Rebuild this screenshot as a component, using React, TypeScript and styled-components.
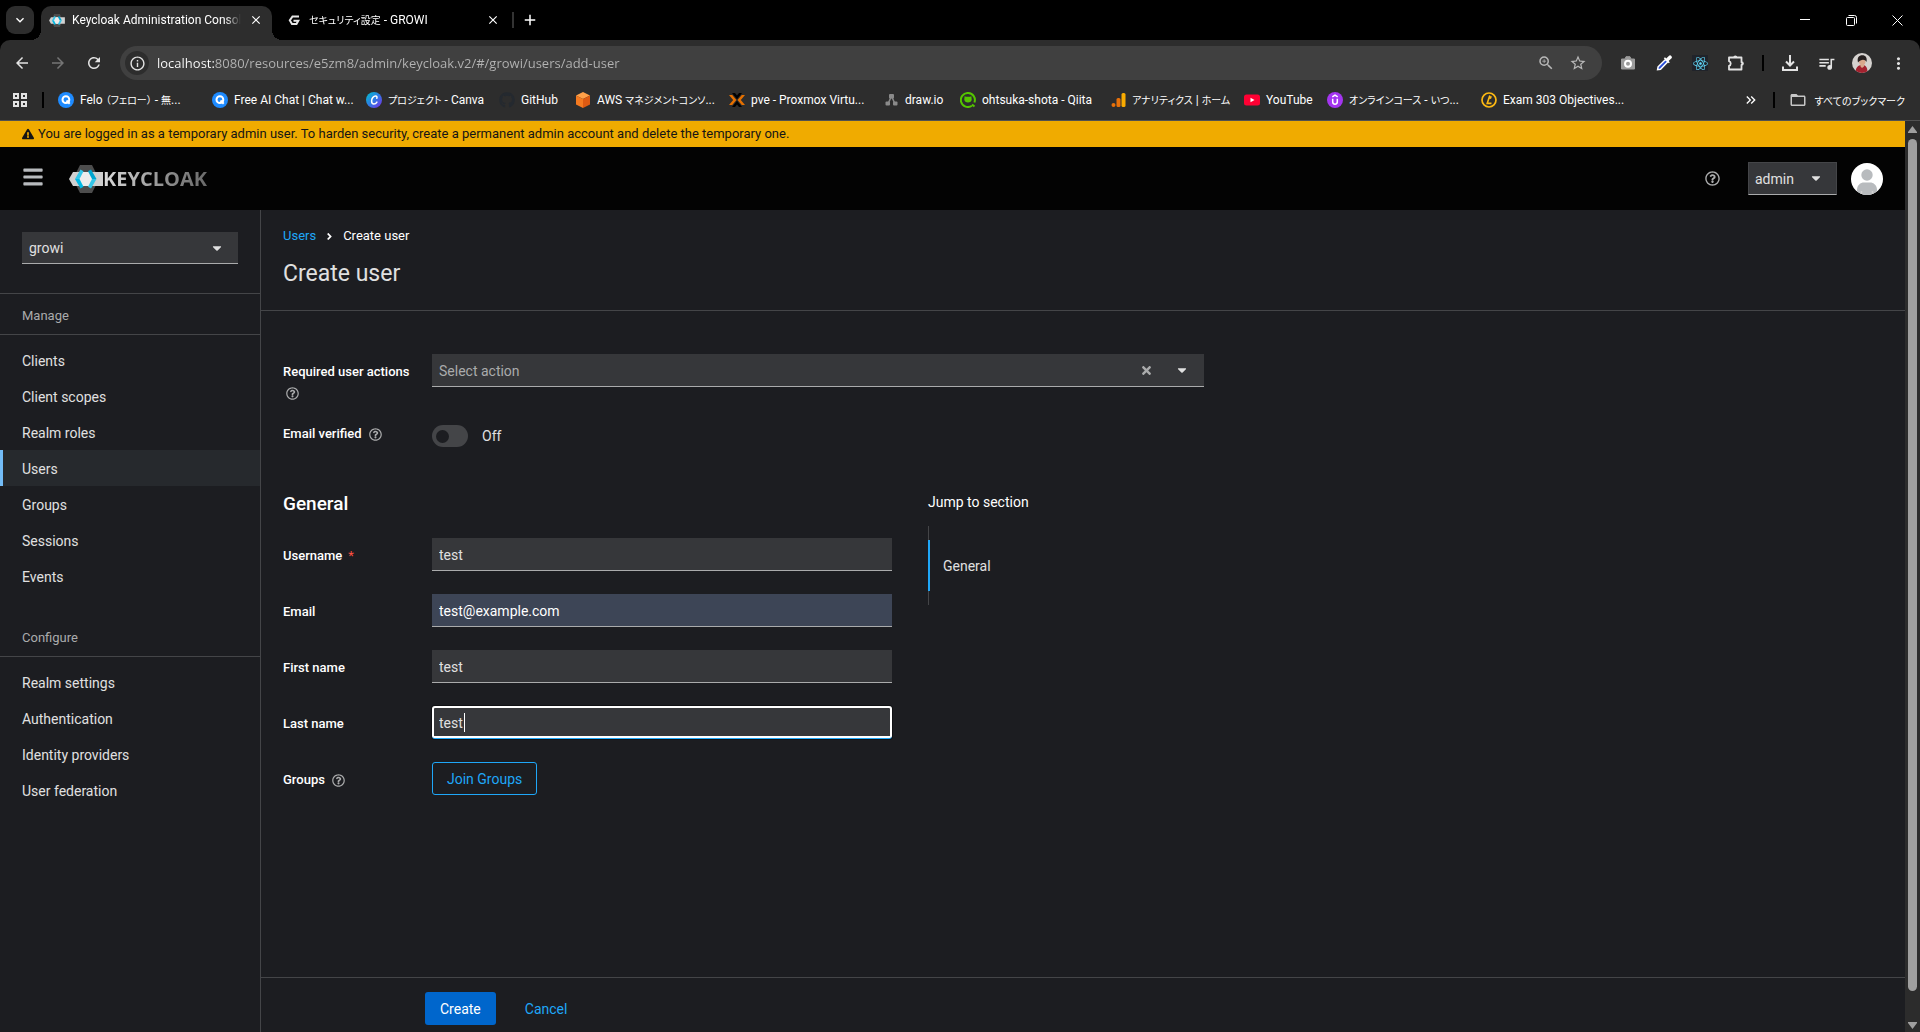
import React, { useState } from "react";
import styled, { createGlobalStyle, css } from "styled-components";
import {
  MdArrowBack,
  MdArrowForward,
  MdRefresh,
  MdOutlineZoomIn,
  MdStarBorder,
  MdQueueMusic,
  MdMoreVert,
  MdClose,
  MdAdd,
  MdExpandMore,
  MdOutlineInfo,
  MdKeyboardDoubleArrowRight,
  MdFolderOpen,
} from "react-icons/md";
import {
  FaBars,
  FaCaretDown,
  FaTimes,
  FaAngleRight,
  FaRegQuestionCircle,
  FaExclamationTriangle,
  FaGithub,
  FaReact,
} from "react-icons/fa";

const uiFont = `Roboto, "Noto Sans CJK JP", sans-serif`;

const color = {
  strip: "#000000",
  toolbar: "#2d2d2d",
  omnibox: "#404040",
  page: "#1c1d21",
  line: "#444548",
  field: "#36373a",
  fieldLine: "#aaabac",
  text: "#e0e0e0",
  muted: "#aaabac",
  link: "#1fa7f8",
  primary: "#0066cc",
  warning: "#f0ab00",
};

const GlobalStyle = createGlobalStyle`
  *, *::before, *::after { box-sizing: border-box; }
  body { margin: 0; background: ${color.page}; color: ${color.text}; font-family: ${uiFont}; font-size: 14px; }
  button, input, select { font: inherit; color: inherit; margin: 0; }
  button { padding: 0; border: 0; background: none; cursor: pointer; }
  a { color: inherit; text-decoration: none; }
  svg { display: block; flex: none; }
`;

const Window = styled.div`
  display: flex;
  flex-direction: column;
  height: 100vh;
  overflow: hidden;
`;

/* ---------- Browser chrome ---------- */

const TabStrip = styled.div`
  display: flex;
  height: 40px;
  padding: 6px 0 0 6px;
  background: ${color.strip};
  color: #fff;
  font-size: 12px;
`;

const TabSearch = styled.button`
  display: grid;
  place-items: center;
  width: 28px;
  height: 28px;
  margin-right: 7px;
  border-radius: 9px;
  background: ${color.toolbar};
`;

const Tab = styled.div<{ $active?: boolean }>`
  position: relative;
  display: flex;
  align-items: center;
  gap: 7px;
  width: 231px;
  height: 34px;
  margin-right: 6px;
  padding: 0 8px 6px;
  border-radius: 10px 10px 0 0;
  ${(p) =>
    p.$active &&
    css`
      background: ${color.toolbar};
      &::before,
      &::after {
        content: "";
        position: absolute;
        bottom: 0;
        width: 10px;
        height: 10px;
      }
      &::before {
        left: -10px;
        background: radial-gradient(circle at 0 0, transparent 10px, ${color.toolbar} 10px);
      }
      &::after {
        right: -10px;
        background: radial-gradient(circle at 100% 0, transparent 10px, ${color.toolbar} 10px);
      }
    `}
`;

const TabTitle = styled.span`
  flex: 1;
  min-width: 0;
  overflow: hidden;
  white-space: nowrap;
  line-height: 18px;
  mask-image: linear-gradient(90deg, #000 calc(100% - 16px), transparent);
`;

const TabClose = styled.button`
  display: grid;
  place-items: center;
  width: 16px;
  height: 16px;
`;

const TabDivider = styled.span`
  width: 2px;
  height: 16px;
  margin: 6px 0 0 -3px;
  background: #333;
`;

const NewTab = styled.button`
  display: grid;
  place-items: center;
  width: 28px;
  height: 28px;
  margin-left: 2px;
`;

const WindowControls = styled.div`
  display: flex;
  margin: -6px 0 0 auto;
`;

const WindowButton = styled.button`
  display: grid;
  place-items: center;
  width: 46px;
  height: 40px;
`;

const ToolbarBack = styled.div`
  background: ${color.strip};
`;

const Toolbar = styled.div`
  display: flex;
  align-items: center;
  height: 40px;
  padding: 6px 4px 0;
  border-radius: 10px 10px 0 0;
  background: ${color.toolbar};
  color: #e3e3e3;
`;

const ToolButton = styled.button<{ $dim?: boolean }>`
  display: grid;
  place-items: center;
  flex: none;
  width: 36px;
  height: 34px;
  color: ${(p) => (p.$dim ? "#757575" : "#e3e3e3")};
`;

const Separator = styled.span<{ $cell: number }>`
  flex: none;
  width: ${(p) => p.$cell}px;
  height: 16px;
  background: linear-gradient(#000, #000) center / 2px 100% no-repeat;
`;

const Omnibox = styled.div`
  display: flex;
  align-items: center;
  flex: 1;
  height: 34px;
  margin: 0 8px;
  padding: 0 8px 0 5px;
  border-radius: 17px;
  background: ${color.omnibox};
`;

const SiteInfo = styled.button`
  display: grid;
  place-items: center;
  width: 24px;
  height: 24px;
  margin-right: 8px;
  border-radius: 50%;
  background: ${color.toolbar};
`;

const Address = styled.input`
  flex: 1;
  min-width: 0;
  height: 24px;
  padding: 0;
  border: 0;
  outline: 0;
  font-family: "Open Sans", sans-serif;
  font-size: 13px;
  color: transparent;
  background: linear-gradient(90deg, #fff 57px, #b4b4b4 57px);
  background-clip: text;
`;

const OmniButton = styled.button`
  display: grid;
  place-items: center;
  width: 32px;
  height: 32px;
  color: #b8b8b8;
`;

const BookmarkBar = styled.nav`
  display: flex;
  align-items: center;
  height: 41px;
  padding: 0 15px 0 4px;
  border-bottom: 1px solid #515151;
  background: ${color.toolbar};
  color: #fff;
  font-size: 12px;
  white-space: nowrap;
`;

const AppsButton = styled.button`
  display: grid;
  place-items: center;
  width: 32px;
  height: 32px;
`;

const Bookmark = styled.a<{ $slot: number }>`
  display: flex;
  align-items: center;
  gap: 6px;
  flex: 0 0 ${(p) => p.$slot}px;
  line-height: 20px;
`;

const BookmarkList = styled.div`
  display: flex;
  flex: 1;
  min-width: 0;
  padding-left: 8px;
  overflow: hidden;
`;

const Ja = styled.span`
  font-size: 10px;
  font-feature-settings: "palt";
`;

const AllBookmarks = styled.a`
  display: flex;
  align-items: center;
  gap: 8px;
  padding-left: 4px;
`;

const MoreBookmarks = styled.button`
  display: grid;
  place-items: center;
  width: 24px;
  height: 24px;
`;

/* ---------- Page ---------- */

const Viewport = styled.div`
  display: flex;
  flex: 1;
  min-height: 0;
`;

const Page = styled.div`
  display: flex;
  flex-direction: column;
  flex: 1;
  min-width: 0;
`;

const ScrollTrack = styled.div`
  display: flex;
  flex-direction: column;
  align-items: center;
  flex: none;
  width: 15px;
  padding: 5px 0 3px;
  background: #2c2c2c;
  color: #9f9f9f;
`;

const ScrollThumb = styled.div`
  flex: 1;
  width: 9px;
  margin: 6px 0 31px;
  border-radius: 5px;
  background: #9f9f9f;
`;

const Banner = styled.div`
  display: flex;
  align-items: center;
  gap: 4px;
  height: 26px;
  flex: none;
  padding: 0 22px 1px;
  background: ${color.warning};
  color: #151515;
  font-size: 13px;
`;

const Masthead = styled.header`
  display: flex;
  align-items: center;
  flex: none;
  height: 63px;
  padding: 0 22px;
  background: #030303;
`;

const MenuButton = styled.button`
  margin-right: 25px;
  padding-bottom: 3px;
  color: #b8bbbe;
`;

const Brand = styled.a`
  display: flex;
  align-items: center;
`;

const BrandName = styled.span`
  font-family: "Open Sans", sans-serif;
  font-size: 20px;
  font-weight: 700;
  line-height: 28px;
  color: transparent;
  background: linear-gradient(90deg, #dcdcdc, #8f8f8f 60%, #6a6a6a);
  background-clip: text;
`;

const MastheadTools = styled.div`
  display: flex;
  align-items: center;
  margin-left: auto;
`;

const HelpButton = styled.button`
  color: ${color.muted};
`;

const SelectBox = styled.div`
  position: relative;
  color: ${color.text};
  select {
    display: block;
    width: 100%;
    height: 32px;
    padding: 0 32px 0 7px;
    appearance: none;
    border: 0;
    border-bottom: 1px solid ${color.fieldLine};
    border-radius: 0;
    background: ${color.field};
    outline: 0;
  }
  svg {
    position: absolute;
    right: 14px;
    top: 9px;
    pointer-events: none;
  }
`;

const UserMenu = styled(SelectBox)`
  width: 89px;
  margin: 0 14px 0 28px;
  select {
    height: 33px;
    padding-left: 6px;
    border: 1px solid ${color.line};
    border-bottom-color: ${color.fieldLine};
  }
`;

const Columns = styled.div`
  display: flex;
  flex: 1;
  min-height: 0;
`;

const Sidebar = styled.nav`
  flex: none;
  width: 261px;
  border-right: 1px solid ${color.line};
`;

const RealmPicker = styled.div`
  padding: 22px 22px 29px;
  border-bottom: 1px solid ${color.line};
`;

const NavTitle = styled.h2`
  margin: 0;
  padding: 12px 22px 8px;
  border-bottom: 1px solid ${color.line};
  font-size: 13px;
  font-weight: 400;
  line-height: 20px;
  color: ${color.muted};
`;

const NavList = styled.ul`
  margin: 0;
  padding: 7px 0 22px;
  list-style: none;
`;

const NavLink = styled.a<{ $current?: boolean }>`
  display: block;
  padding: 9px 22px 7px 19px;
  border-left: 3px solid ${(p) => (p.$current ? "#73bcf7" : "transparent")};
  line-height: 20px;
  background: ${(p) => (p.$current ? "#26292d" : "none")};
`;

const Main = styled.main`
  display: flex;
  flex-direction: column;
  flex: 1;
  min-width: 0;
`;

const PageHead = styled.section`
  padding: 17px 22px 21px;
  border-bottom: 1px solid ${color.line};
`;

const Breadcrumb = styled.nav`
  display: flex;
  align-items: center;
  gap: 8px;
  font-size: 13px;
  line-height: 18px;
  color: #fff;
  a {
    color: ${color.link};
  }
`;

const Title = styled.h1`
  margin: 14px 0 0;
  font-size: 23px;
  font-weight: 400;
  line-height: 30px;
`;

const FormArea = styled.form`
  display: flex;
  flex-direction: column;
  flex: 1;
  min-height: 0;
`;

const FormBody = styled.div`
  flex: 1;
  width: 100%;
  max-width: 965px;
  padding: 43px 22px 0;
`;

const Rows = styled.div<{ $gap: number }>`
  display: grid;
  gap: ${(p) => p.$gap}px;
`;

const FormRow = styled.div`
  display: grid;
  grid-template-columns: 135px minmax(0, 1fr);
  column-gap: 14px;
`;

const LabelCell = styled.div`
  display: flex;
  flex-wrap: wrap;
  align-items: center;
  align-content: flex-start;
  gap: 5px 4px;
  padding-top: 8px;
  color: #fff;
  font-size: 13px;
  font-weight: 500;
  line-height: 20px;
  button {
    padding: 0 3px;
  }
`;

const Required = styled.span`
  margin-left: 2px;
  font-weight: 400;
  color: #fe5142;
`;

const Field = styled.div`
  position: relative;
`;

const TextInput = styled.input<{ $autofilled?: boolean; $focused?: boolean }>`
  display: block;
  width: 100%;
  height: 33px;
  padding: 2px 7px 0;
  border: 0;
  border-bottom: 1px solid ${color.fieldLine};
  border-radius: 0;
  outline: 0;
  background: ${(p) => (p.$autofilled ? "#3d4556" : color.field)};
  color: ${(p) => (p.$autofilled ? "#fff" : color.text)};
  ${(p) =>
    p.$focused &&
    css`
      border-bottom-color: ${color.link};
      border-radius: 3px;
      box-shadow: inset 0 0 0 2px #fff, 0 0 0 1px #101114;
      caret-color: transparent;
    `}
`;

const Caret = styled.span`
  position: absolute;
  left: 32px;
  top: 7px;
  width: 1px;
  height: 19px;
  background: #fff;
`;

const Typeahead = styled.div`
  display: flex;
  align-items: center;
  height: 33px;
  padding-right: 4px;
  border-bottom: 1px solid ${color.fieldLine};
  background: ${color.field};
  input {
    flex: 1;
    min-width: 0;
    padding: 2px 7px 0;
    border: 0;
    outline: 0;
    background: none;
  }
  input::placeholder {
    color: ${color.muted};
    opacity: 1;
  }
  button {
    display: grid;
    place-items: center;
    width: 36px;
    height: 32px;
  }
`;

const SwitchLabel = styled.label`
  display: flex;
  align-items: center;
  gap: 14px;
  padding-top: 9px;
  line-height: 22px;
`;

const Switch = styled.input`
  appearance: none;
  display: flex;
  align-items: center;
  width: 36px;
  height: 22px;
  padding: 0 4px;
  border-radius: 11px;
  background: #444548;
  &::before {
    content: "";
    width: 13px;
    height: 13px;
    border-radius: 50%;
    background: ${color.page};
  }
  &:checked {
    justify-content: flex-end;
    background: ${color.link};
  }
`;

const Sections = styled.div`
  display: grid;
  grid-template-columns: minmax(0, 609px) minmax(0, 1fr);
  column-gap: 36px;
  margin-top: 45px;
`;

const SectionTitle = styled.h2`
  margin: 0 0 22px;
  font-size: 19px;
  font-weight: 500;
  line-height: 24px;
  color: #fff;
`;

const JumpTitle = styled.div`
  margin-bottom: 14px;
  line-height: 20px;
  color: #fff;
  white-space: nowrap;
`;

const JumpList = styled.ul`
  margin: 0;
  padding: 14px 0;
  list-style: none;
  border-left: 1px solid ${color.line};
  a {
    display: block;
    margin-left: -1px;
    padding: 16px 13px 15px;
    border-left: 2px solid ${color.link};
    line-height: 20px;
  }
`;

const Button = styled.button<{ $kind: "primary" | "secondary" | "link" }>`
  height: 33px;
  padding: 0 14px;
  border-radius: 3px;
  ${(p) =>
    p.$kind === "primary"
      ? css`
          padding: 0 15px;
          background: ${color.primary};
          color: #fff;
        `
      : css`
          color: ${color.link};
        `}
  ${(p) =>
    p.$kind === "secondary" &&
    css`
      border: 1px solid ${color.link};
    `}
`;

const Footer = styled.footer`
  display: flex;
  gap: 15px;
  padding: 14px 22px 7px 164px;
  border-top: 1px solid ${color.line};
`;

/* ---------- Icons ---------- */

const KeycloakMark = ({ width = 34, height = 28 }: { width?: number; height?: number }) => (
  <svg width={width} height={height} viewBox="0 0 34 28" aria-hidden="true">
    <path d="M11 0h12l7 14-7 14H11L4 14z" fill="#4d4d4d" />
    <path d="M4 7h30v14H4L0 14z" fill="#d0d0d0" />
    <path d="M13 7h7l4 7-4 7h-7l-3-7z" fill="#ececec" />
    <path d="M11.500 4.500L14.500 6.200 10.500 14H6z" fill="#33c6e9" />
    <path d="M6 14h4.500l4 7.800-3 1.700z" fill="#00b8e3" />
    <path d="M22 4.500L19 6.200l4 7.800h4.500z" fill="#00a5cf" />
    <path d="M27.500 14H23l-4 7.800 3 1.700z" fill="#33c6e9" />
  </svg>
);

const GrowiIcon = () => (
  <svg width="16" height="16" viewBox="0 0 16 16" aria-hidden="true">
    <path d="M13 4.500H6.500L3.800 8.300l2.200 3.700h4.500l1.800-3.200H7.500" fill="none" stroke="#e6e6e6" strokeWidth="2" />
  </svg>
);

const FeloIcon = () => (
  <svg width="16" height="16" viewBox="0 0 16 16" aria-hidden="true">
    <circle cx="8" cy="8" r="8" fill="#1e8bff" />
    <circle cx="7.900" cy="7.700" r="3.400" fill="none" stroke="#fff" strokeWidth="2" />
    <path d="M8.500 8.500l3.200 3.300" stroke="#fff" strokeWidth="2" />
  </svg>
);

const CanvaIcon = () => (
  <svg width="16" height="16" viewBox="0 0 16 16" aria-hidden="true">
    <defs>
      <linearGradient id="canva" x1="0" y1="0" x2="1" y2="1">
        <stop offset="0" stopColor="#00c4cc" />
        <stop offset=".5" stopColor="#2f7be5" />
        <stop offset="1" stopColor="#7d2ae8" />
      </linearGradient>
    </defs>
    <circle cx="8" cy="8" r="8" fill="url(#canva)" />
    <path d="M10.800 6.200c.5-1.300 0-2.200-1.200-2.200C7.500 4 5.600 6.500 5.600 9c0 1.800.9 3 2.300 3 1.200 0 2.300-.7 3-1.900" fill="none" stroke="#fff" strokeWidth="1.500" strokeLinecap="round" />
  </svg>
);

const AwsIcon = () => (
  <svg width="16" height="16" viewBox="0 0 16 16" aria-hidden="true">
    <path d="M8 0l7 3.500L8 7 1 3.500z" fill="#ffa048" />
    <path d="M1 3.500L8 7v9l-7-3.500z" fill="#f47a20" />
    <path d="M15 3.500L8 7v9l7-3.500z" fill="#dd5a12" />
  </svg>
);

const ProxmoxIcon = () => (
  <svg width="16" height="16" viewBox="0 0 16 16" aria-hidden="true">
    <path d="M3 1h3l2 2.400L10 1h3L8 7.200zM3 15h3l2-2.400L10 15h3L8 8.800z" fill="#000" />
    <path d="M0 3h3.200L7.400 8l-4.200 5H0l4.200-5zM16 3h-3.200L8.600 8l4.200 5H16l-4.200-5z" fill="#e57000" />
  </svg>
);

const DrawioIcon = () => (
  <svg width="15" height="16" viewBox="0 0 15 16" aria-hidden="true">
    <path d="M7.500 4L4 12M7.500 4l3.500 8" stroke="#8a8a8a" strokeWidth="1.500" />
    <rect x="5" y="2" width="5" height="4.500" rx="1" fill="#8a8a8a" />
    <rect x="1.500" y="9.500" width="4.500" height="4" rx="1" fill="#8a8a8a" />
    <rect x="9" y="9.500" width="4.500" height="4" rx="1" fill="#8a8a8a" />
  </svg>
);

const QiitaIcon = () => (
  <svg width="16" height="16" viewBox="0 0 16 16" aria-hidden="true">
    <path d="M11.900 13.700A7 7 0 1 1 14.400 10.500" fill="none" stroke="#55c500" strokeWidth="2" />
    <path d="M12 12.500l2.500 2" stroke="#55c500" strokeWidth="2" />
    <path d="M4.600 4.200l1.500.6h3.800l1.500-.6.300 3.300c0 2-1.700 3-3.700 3s-3.700-1-3.700-3z" fill="#55c500" />
  </svg>
);

const AnalyticsIcon = () => (
  <svg width="15" height="16" viewBox="0 0 15 16" aria-hidden="true">
    <circle cx="2.500" cy="13" r="2" fill="#e8710a" />
    <rect x="5.500" y="6" width="4" height="9" rx="1.500" fill="#e8710a" />
    <rect x="10.500" y="1" width="4" height="14" rx="1.500" fill="#f9ab00" />
  </svg>
);

const YouTubeIcon = () => (
  <svg width="16" height="16" viewBox="0 0 16 16" aria-hidden="true">
    <rect y="2.500" width="16" height="11" rx="2.500" fill="#ff0033" />
    <path d="M6.500 5.700v4.600L10.500 8z" fill="#fff" />
  </svg>
);

const UdemyIcon = () => (
  <svg width="16" height="16" viewBox="0 0 16 16" aria-hidden="true">
    <circle cx="8" cy="8" r="8" fill="#a435f0" />
    <path d="M5.300 4.800L8 3.200l2.700 1.600M5.700 6.800v3c0 1.400.9 2.400 2.300 2.400s2.300-1 2.300-2.400v-3" fill="none" stroke="#fff" strokeWidth="1.500" />
  </svg>
);

const LpiIcon = () => (
  <svg width="16" height="16" viewBox="0 0 16 16" aria-hidden="true">
    <circle cx="8" cy="8" r="7" fill="none" stroke="#fdb913" strokeWidth="1.700" />
    <path d="M8.800 3.600L6.200 11.400h4.300M10.200 4.200l-1 2.600" fill="none" stroke="#fdb913" strokeWidth="1.600" />
  </svg>
);

const CameraIcon = () => (
  <svg width="16" height="16" viewBox="0 0 16 16" aria-hidden="true">
    <path d="M1.500 4H5l1-2.300h4L11 4h3.500v10h-13z" fill="#9b9b9b" stroke="#9b9b9b" strokeLinejoin="round" />
    <circle cx="8" cy="8.800" r="3" fill="none" stroke="#fff" strokeWidth="2" />
  </svg>
);

const DropperIcon = () => (
  <svg width="16" height="16" viewBox="0 0 16 16" aria-hidden="true">
    <path d="M9.500 4.500l2.300 2.300-7.300 7.400-2.900.4.500-2.800z" fill="#2b50d8" stroke="#fff" strokeWidth="1.500" />
    <path d="M7.800 3.300l5 5 1-1-1.200-1.300 2.700-2.600a1.700 1.700 0 0 0-2.500-2.500L10.200 3.500 9 2.200z" fill="#fff" />
  </svg>
);

const ExtensionIcon = () => (
  <svg width="18" height="18" viewBox="0 0 18 18" fill="none" aria-hidden="true">
    <path
      d="M2 3.500h12.500v4.700a1.300 1.300 0 0 1 0 2.600v4.700H2v-3.700a2.400 2.400 0 0 0 0-4.600z"
      stroke="#e3e3e3"
      strokeWidth="1.800"
      strokeLinejoin="round"
    />
    <path d="M6.300 3.500a2 2 0 0 1 4 0zM14.500 7.500a2 2 0 0 1 0 4z" fill="#e3e3e3" />
  </svg>
);

const ReactTile = styled.span`
  display: grid;
  place-items: center;
  width: 16px;
  height: 16px;
  background: #20232a;
  color: #61dafb;
`;

const DownloadIcon = () => (
  <svg width="18" height="18" viewBox="0 0 18 18" fill="none" stroke="#e3e3e3" strokeWidth="2" aria-hidden="true">
    <path d="M9 1v10M5 7.500l4 4 4-4M2 12.500V16h14v-3.500" />
  </svg>
);

const ProfilePhoto = () => (
  <svg width="20" height="20" viewBox="0 0 20 20" aria-hidden="true">
    <clipPath id="profile">
      <circle cx="10" cy="10" r="10" />
    </clipPath>
    <g clipPath="url(#profile)">
      <rect width="20" height="20" fill="#d5d2cf" />
      <path d="M3.500 20c0-5 2-8 6.500-8s5.500 3 5.500 8z" fill="#a3222f" />
      <path d="M8.500 11h3.500v2.500l-2 1.500-1.500-1.500z" fill="#d9a78c" />
      <ellipse cx="10.300" cy="8.500" rx="3.200" ry="3.700" fill="#d9a78c" />
      <path d="M6 9.500C4.800 4.500 7 2.300 10.300 2.300s5.200 2.500 4.200 6.700c-.8-1.500-2-2.300-3.500-2.300S7.500 7.500 6 9.500z" fill="#26201f" />
    </g>
  </svg>
);

const AvatarIcon = () => (
  <svg width="32" height="32" viewBox="0 0 32 32" aria-hidden="true">
    <clipPath id="avatar">
      <circle cx="16" cy="16" r="16" />
    </clipPath>
    <g clipPath="url(#avatar)">
      <rect width="32" height="32" fill="#fff" />
      <circle cx="16" cy="12" r="5.700" fill="#b8bbbe" />
      <path d="M6 32v-5c0-5 3.500-7.500 7-7.500h6c3.500 0 7 2.500 7 7.500v5z" fill="#b8bbbe" />
      <path d="M10.500 32v-4M21.500 32v-4" stroke="#d2d2d2" strokeWidth="1.500" />
    </g>
  </svg>
);

const AppsIcon = () => (
  <svg width="16" height="16" viewBox="0 0 16 16" fill="none" stroke="#e3e3e3" strokeWidth="2" aria-hidden="true">
    <path d="M2 2h4v4H2zM10 2h4v4h-4zM2 10h4v4H2zM10 10h4v4h-4z" />
  </svg>
);

const MinimizeIcon = () => (
  <svg width="10" height="10" stroke="#fff" aria-hidden="true">
    <path d="M0 4.500h10" />
  </svg>
);

const RestoreIcon = () => (
  <svg width="11" height="11" fill="none" stroke="#fff" aria-hidden="true">
    <rect x=".5" y="2.500" width="8" height="8" rx="1" />
    <path d="M2.500 .5h6a2 2 0 0 1 2 2v6" />
  </svg>
);

const CloseWindowIcon = () => (
  <svg width="11" height="11" fill="none" stroke="#fff" aria-hidden="true">
    <path d="M.5 .5l10 10M10.500 .5l-10 10" />
  </svg>
);

/* ---------- Data ---------- */

const bookmarks = [
  { icon: <FeloIcon />, slot: 154, label: <>Felo <Ja>（フェロー）</Ja> - <Ja>無</Ja>...</> },
  { icon: <FeloIcon />, slot: 154, label: "Free AI Chat | Chat w..." },
  { icon: <CanvaIcon />, slot: 133, label: <><Ja>プロジェクト</Ja> - Canva</> },
  { icon: <FaGithub size={16} color="#24292f" />, slot: 76, label: "GitHub" },
  { icon: <AwsIcon />, slot: 154, label: <>AWS <Ja>マネジメントコンソ</Ja>...</> },
  { icon: <ProxmoxIcon />, slot: 155, label: "pve - Proxmox Virtu..." },
  { icon: <DrawioIcon />, slot: 76, label: "draw.io" },
  { icon: <QiitaIcon />, slot: 151, label: "ohtsuka-shota - Qiita" },
  { icon: <AnalyticsIcon />, slot: 133, label: <><Ja>アナリティクス</Ja> | <Ja>ホーム</Ja></> },
  { icon: <YouTubeIcon />, slot: 83, label: "YouTube" },
  { icon: <UdemyIcon />, slot: 154, label: <><Ja>オンラインコース</Ja> - <Ja>いつ</Ja>...</> },
  { icon: <LpiIcon />, slot: 154, label: "Exam 303 Objectives..." },
];

const navGroups = [
  { title: "Manage", items: ["Clients", "Client scopes", "Realm roles", "Users", "Groups", "Sessions", "Events"] },
  { title: "Configure", items: ["Realm settings", "Authentication", "Identity providers", "User federation"] },
];

const textFields = [
  { id: "username", label: "Username", value: "test", required: true },
  { id: "email", label: "Email", value: "test@example.com", autofilled: true },
  { id: "firstName", label: "First name", value: "test" },
  { id: "lastName", label: "Last name", value: "test", focused: true },
];

const Help = ({ topic }: { topic: string }) => (
  <HelpButton type="button" aria-label={`Help for ${topic}`}>
    <FaRegQuestionCircle size={13} />
  </HelpButton>
);

const BrowserChrome = () => (
  <>
    <TabStrip>
      <TabSearch aria-label="Search tabs">
        <MdExpandMore size={16} />
      </TabSearch>
      <Tab $active>
        <KeycloakMark width={16} height={13} />
        <TabTitle>Keycloak Administration Consol</TabTitle>
        <TabClose aria-label="Close tab">
          <MdClose size={14} />
        </TabClose>
      </Tab>
      <Tab>
        <GrowiIcon />
        <TabTitle>
          <Ja>セキュリティ設定</Ja> - GROWI
        </TabTitle>
        <TabClose aria-label="Close tab">
          <MdClose size={14} />
        </TabClose>
      </Tab>
      <TabDivider />
      <NewTab aria-label="New tab">
        <MdAdd size={18} />
      </NewTab>
      <WindowControls>
        <WindowButton aria-label="Minimize"><MinimizeIcon /></WindowButton>
        <WindowButton aria-label="Restore"><RestoreIcon /></WindowButton>
        <WindowButton aria-label="Close"><CloseWindowIcon /></WindowButton>
      </WindowControls>
    </TabStrip>
    <ToolbarBack>
      <Toolbar>
        <ToolButton aria-label="Back"><MdArrowBack size={18} /></ToolButton>
        <ToolButton aria-label="Forward" $dim><MdArrowForward size={18} /></ToolButton>
        <ToolButton aria-label="Reload"><MdRefresh size={18} /></ToolButton>
        <Omnibox>
          <SiteInfo aria-label="Site information"><MdOutlineInfo size={17} /></SiteInfo>
          <Address
            aria-label="Address"
            defaultValue="localhost:8080/resources/e5zm8/admin/keycloak.v2/#/growi/users/add-user"
          />
          <OmniButton aria-label="Zoom"><MdOutlineZoomIn size={18} /></OmniButton>
          <OmniButton aria-label="Bookmark this page"><MdStarBorder size={18} /></OmniButton>
        </Omnibox>
        <ToolButton aria-label="Screenshot extension"><CameraIcon /></ToolButton>
        <ToolButton aria-label="Color picker extension"><DropperIcon /></ToolButton>
        <ToolButton aria-label="React developer tools"><ReactTile><FaReact size={15} /></ReactTile></ToolButton>
        <ToolButton aria-label="Extensions"><ExtensionIcon /></ToolButton>
        <Separator $cell={18} />
        <ToolButton aria-label="Downloads"><DownloadIcon /></ToolButton>
        <ToolButton aria-label="Media controls"><MdQueueMusic size={19} /></ToolButton>
        <ToolButton aria-label="Profile"><ProfilePhoto /></ToolButton>
        <ToolButton aria-label="Browser menu"><MdMoreVert size={19} /></ToolButton>
      </Toolbar>
    </ToolbarBack>
    <BookmarkBar aria-label="Bookmarks">
      <AppsButton aria-label="Apps"><AppsIcon /></AppsButton>
      <Separator $cell={14} />
      <BookmarkList>
        {bookmarks.map((b, i) => (
          <Bookmark key={i} href="#" $slot={b.slot}>
            {b.icon}
            <span>{b.label}</span>
          </Bookmark>
        ))}
      </BookmarkList>
      <MoreBookmarks aria-label="More bookmarks"><MdKeyboardDoubleArrowRight size={16} /></MoreBookmarks>
      <Separator $cell={22} />
      <AllBookmarks href="#">
        <MdFolderOpen size={18} color="#c7c7c7" />
        <Ja>すべてのブックマーク</Ja>
      </AllBookmarks>
    </BookmarkBar>
  </>
);

const SideNav = () => (
  <Sidebar aria-label="Realm">
    <RealmPicker>
      <SelectBox>
        <select aria-label="Realm" defaultValue="growi">
          <option>growi</option>
        </select>
        <FaCaretDown size={14} />
      </SelectBox>
    </RealmPicker>
    {navGroups.map((group) => (
      <section key={group.title}>
        <NavTitle>{group.title}</NavTitle>
        <NavList>
          {group.items.map((item) => (
            <li key={item}>
              <NavLink href="#" $current={item === "Users"}>{item}</NavLink>
            </li>
          ))}
        </NavList>
      </section>
    ))}
  </Sidebar>
);

const CreateUserForm = () => {
  const [verified, setVerified] = useState(false);
  return (
    <FormArea onSubmit={(e) => e.preventDefault()}>
      <FormBody>
        <Rows $gap={16}>
          <FormRow>
            <LabelCell>
              <label htmlFor="actions">Required user actions</label>
              <Help topic="required user actions" />
            </LabelCell>
            <Typeahead>
              <input id="actions" placeholder="Select action" />
              <button type="button" aria-label="Clear"><FaTimes size={13} color={color.muted} /></button>
              <button type="button" aria-label="Toggle options"><FaCaretDown size={14} /></button>
            </Typeahead>
          </FormRow>
          <FormRow>
            <LabelCell>
              <label htmlFor="verified">Email verified</label>
              <Help topic="email verified" />
            </LabelCell>
            <SwitchLabel>
              <Switch
                id="verified"
                type="checkbox"
                role="switch"
                checked={verified}
                onChange={(e) => setVerified(e.target.checked)}
              />
              {verified ? "On" : "Off"}
            </SwitchLabel>
          </FormRow>
        </Rows>
        <Sections>
          <section>
            <SectionTitle>General</SectionTitle>
            <Rows $gap={23}>
              {textFields.map((f) => (
                <FormRow key={f.id}>
                  <LabelCell>
                    <label htmlFor={f.id}>{f.label}</label>
                    {f.required && <Required>*</Required>}
                  </LabelCell>
                  <Field>
                    <TextInput id={f.id} defaultValue={f.value} $autofilled={f.autofilled} $focused={f.focused} />
                    {f.focused && <Caret />}
                  </Field>
                </FormRow>
              ))}
              <FormRow>
                <LabelCell>
                  <span>Groups</span>
                  <Help topic="groups" />
                </LabelCell>
                <div>
                  <Button type="button" $kind="secondary">Join Groups</Button>
                </div>
              </FormRow>
            </Rows>
          </section>
          <nav aria-label="Jump to section">
            <JumpTitle>Jump to section</JumpTitle>
            <JumpList>
              <li><a href="#">General</a></li>
            </JumpList>
          </nav>
        </Sections>
      </FormBody>
      <Footer>
        <Button type="submit" $kind="primary">Create</Button>
        <Button type="button" $kind="link">Cancel</Button>
      </Footer>
    </FormArea>
  );
};

export default function App() {
  return (
    <Window>
      <GlobalStyle />
      <BrowserChrome />
      <Viewport>
        <Page>
          <Banner>
            <FaExclamationTriangle size={12} />
            <span>
              You are logged in as a temporary admin user. To harden security, create a permanent admin
              account and delete the temporary one.
            </span>
          </Banner>
          <Masthead>
            <MenuButton aria-label="Global navigation"><FaBars size={22} /></MenuButton>
            <Brand href="#" aria-label="Keycloak">
              <KeycloakMark />
              <BrandName>KEYCLOAK</BrandName>
            </Brand>
            <MastheadTools>
              <HelpButton aria-label="Help"><FaRegQuestionCircle size={15} /></HelpButton>
              <UserMenu>
                <select aria-label="Account" defaultValue="admin">
                  <option>admin</option>
                </select>
                <FaCaretDown size={14} />
              </UserMenu>
              <AvatarIcon />
            </MastheadTools>
          </Masthead>
          <Columns>
            <SideNav />
            <Main>
              <PageHead>
                <Breadcrumb aria-label="Breadcrumb">
                  <a href="#">Users</a>
                  <FaAngleRight size={11} />
                  <span>Create user</span>
                </Breadcrumb>
                <Title>Create user</Title>
              </PageHead>
              <CreateUserForm />
            </Main>
          </Columns>
        </Page>
        <ScrollTrack aria-hidden="true">
          <svg width="9" height="7"><path d="M4.500 0L9 6v1H0V6z" fill="currentColor" /></svg>
          <ScrollThumb />
          <svg width="9" height="7"><path d="M4.500 7L9 1V0H0v1z" fill="currentColor" /></svg>
        </ScrollTrack>
      </Viewport>
    </Window>
  );
}
